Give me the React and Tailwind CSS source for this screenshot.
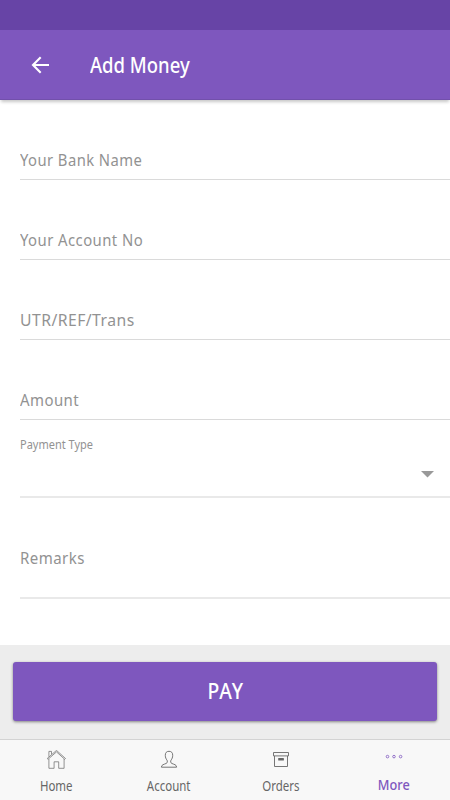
const FIELDS = [
  { label: 'Your Bank Name', fit: 'scale-x-[0.87]' },
  { label: 'Your Account No', fit: 'scale-x-[0.875]' },
  { label: 'UTR/REF/Trans', fit: 'scale-x-[0.925]' },
  { label: 'Amount', fit: 'scale-x-[0.88]' },
]

function HomeIcon() {
  return (
    <svg width="20" height="20" viewBox="0 0 20 20" fill="none" stroke="currentColor" strokeWidth="0.7">
      <path d="M1.2 8.5 10.5.4l9 8.1-.8.8-8.2-7.4L2 9.3z" />
      <path d="M2.9 6.7V1.4h2.6v2.9M2.9 9v9.3h5.2v-6.5h4.6v6.5h5.4V9" />
    </svg>
  )
}

function AccountIcon() {
  return (
    <svg width="20" height="20" viewBox="0 0 20 20" fill="none" stroke="currentColor" strokeWidth="0.9">
      <path d="M10 1.3c2.5 0 3.8 1.5 3.7 4.1 0 2.2-.8 3.5-1.7 4.8-.6 1-.4 2.7.7 3.2 2.2 1 4.9 1.2 4.9 3.8H2.4c0-2.6 2.7-2.8 4.9-3.8 1.1-.5 1.3-2.2.7-3.2-.9-1.3-1.7-2.6-1.7-4.8-.1-2.6 1.2-4.1 3.7-4.1z" />
    </svg>
  )
}

function OrdersIcon() {
  return (
    <svg width="20" height="20" viewBox="0 0 20 20" fill="none" stroke="currentColor" strokeWidth="0.9">
      <path d="M2.5 2.5h15v3.4h-15zM3.5 5.9v10.6h13V5.9" />
      <rect x="7.2" y="8" width="5.7" height="2.4" rx="0.5" fill="currentColor" stroke="none" />
    </svg>
  )
}

function MoreIcon() {
  return (
    <svg width="20" height="20" viewBox="0 0 20 20" fill="none" stroke="currentColor" strokeWidth="0.8">
      <circle cx="3.5" cy="6.6" r="1.3" />
      <circle cx="10" cy="6.6" r="1.3" />
      <circle cx="16.6" cy="6.6" r="1.3" />
    </svg>
  )
}

const TABS = [
  { label: 'Home', Icon: HomeIcon },
  { label: 'Account', Icon: AccountIcon },
  { label: 'Orders', Icon: OrdersIcon },
  { label: 'More', Icon: MoreIcon, active: true },
]

export default function App() {
  return (
    <div className="w-[450px] h-[800px] flex flex-col overflow-hidden bg-white font-['Noto_Sans',sans-serif]">
      <div className="h-[30px] shrink-0 bg-[#6744a6]" />
      <header className="h-[70px] shrink-0 flex items-center pl-[31px] bg-[#7e57be] text-white border-b border-[#7250ab] shadow-[0_3px_3px_-1px_rgba(0,0,0,0.22)]">
        <svg width="18" height="18" viewBox="0 0 18 18" fill="none" stroke="currentColor" strokeWidth="2.1">
          <path d="M18 9H2M9.7 1.3 2 9l7.7 7.7" />
        </svg>
        <h1 className="ml-[41px] text-[21px] leading-7 font-medium whitespace-nowrap origin-left scale-x-[0.88]">Add Money</h1>
      </header>

      <main className="h-[545px] shrink-0 pl-5 text-[#929292]">
        {FIELDS.map(({ label, fit }) => (
          <div key={label} className="h-20 flex items-end pb-[7px] border-b border-[#dadada]">
            <span className={`text-[17px] leading-6 tracking-[0.5px] whitespace-nowrap origin-left ${fit}`}>{label}</span>
          </div>
        ))}
        <div className="h-[78px] flex justify-between border-b-2 border-[#e9e9e9]">
          <span className="pt-4 text-[12.5px] leading-[18px] whitespace-nowrap origin-left scale-x-[0.88]">Payment Type</span>
          <svg className="mt-[51px] mr-4" width="13" height="7" viewBox="0 0 13 7" fill="#999999">
            <path d="M0 0h13L6.5 6.5z" />
          </svg>
        </div>
        <div className="h-[101px] flex items-start pt-[48px] border-b-2 border-[#e9e9e9]">
          <span className="text-[17px] leading-6 tracking-[0.5px] whitespace-nowrap origin-left scale-x-[0.885]">Remarks</span>
        </div>
      </main>

      <div className="h-[94px] shrink-0 pt-[17px] px-[13px] bg-[#ededed]">
        <button className="w-full h-[59px] flex items-center justify-center rounded-[3px] bg-[#7e57be] text-white shadow-[0_1px_3px_rgba(0,0,0,0.45)]">
          <span className="pl-px pt-px text-[21px] font-medium tracking-[1px] scale-x-[0.92]">PAY</span>
        </button>
      </div>

      <nav className="h-[61px] shrink-0 flex bg-[#f8f8f8] border-t border-[#d3d3d3]">
        {TABS.map(({ label, Icon, active }) => (
          <div key={label} className={`flex-1 flex flex-col items-center pt-[10px] ${active ? 'text-[#7e57be]' : 'text-[#666666]'}`}>
            <Icon />
            <span className={`leading-[18px] whitespace-nowrap ${active ? 'mt-[5px] text-[15px] font-medium scale-x-[0.85]' : 'mt-[7px] text-[13.5px] scale-x-[0.85]'}`}>{label}</span>
          </div>
        ))}
      </nav>
    </div>
  )
}
